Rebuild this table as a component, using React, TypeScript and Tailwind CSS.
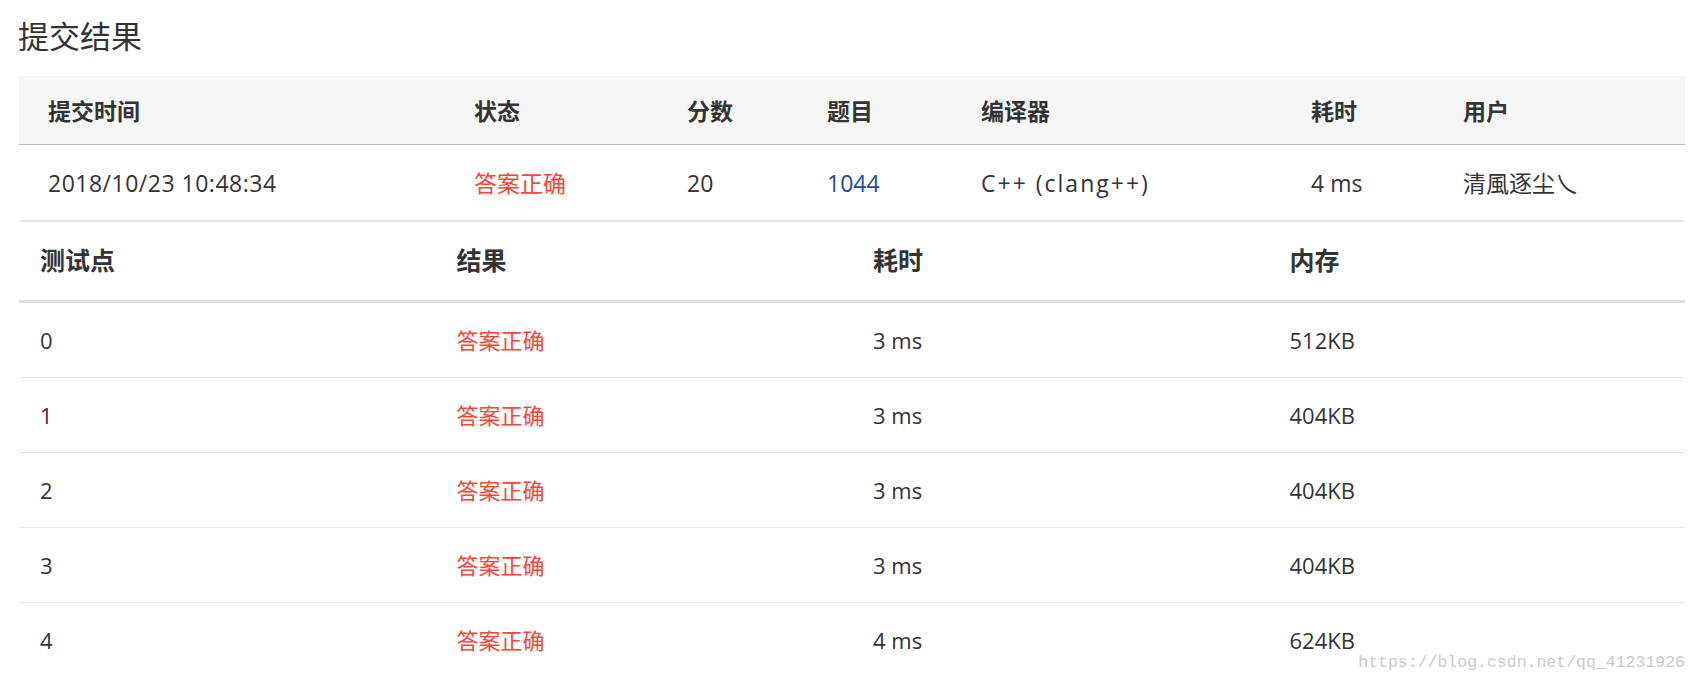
import React from "react";

const font = { fontFamily: '"Open Sans", "Noto Sans CJK SC", sans-serif' };

const summaryHead = ["提交时间", "状态", "分数", "题目", "编译器", "耗时", "用户"];

const cases = [
  { id: "0", time: "3 ms", mem: "512KB" },
  { id: "1", time: "3 ms", mem: "404KB" },
  { id: "2", time: "3 ms", mem: "404KB" },
  { id: "3", time: "3 ms", mem: "404KB" },
  { id: "4", time: "4 ms", mem: "624KB" },
];

const summaryCols = "grid grid-cols-[426px_213px_140px_154px_330px_152px_1fr] pl-[29px]";

export default function App() {
  return (
    <div className="relative h-[686px] w-[1697px] overflow-hidden bg-white text-[#333]" style={font}>
      <div className="flex h-[73px] items-center pl-[18px] mb-[3px]">
        <h1 className="text-[31px] font-normal leading-none text-[#333]">提交结果</h1>
      </div>

      <div className="ml-[19px] w-[1666px]">
        {/* summary */}
        <div className={`${summaryCols} h-[69px] items-center border-b border-[#b4b4b4] bg-[#f6f6f6] text-[23px] font-bold pt-[3px]`}>
          {summaryHead.map((h) => (
            <div key={h}>{h}</div>
          ))}
        </div>
        <div className={`${summaryCols} h-[77px] items-center border-b-2 border-[#e6e6e6] text-[23px] pt-[1px]`}>
          <div className="tracking-[0.5px]">2018/10/23 10:48:34</div>
          <div className="text-[#fa4538]">答案正确</div>
          <div>20</div>
          <div className="text-[#1a4d99]">1044</div>
          <div className="tracking-[2px]">C++ (clang++)</div>
          <div>4 ms</div>
          <div>清風逐尘乀</div>
        </div>

        {/* test cases */}
        <div className="grid h-[81px] grid-cols-4 items-center border-b-[3px] border-[#dedfe5] text-[25px] font-bold">
          <div className="pl-[21px]">测试点</div>
          <div className="pl-[21px]">结果</div>
          <div className="pl-[21px]">耗时</div>
          <div className="pl-[21px]">内存</div>
        </div>
        {cases.map((c, i) => (
          <div
            key={c.id}
            className={`grid h-[75px] grid-cols-4 items-center text-[22px] ${i < cases.length - 1 ? "border-b border-[#e3e3e8]" : ""}`}
          >
            <div className="pl-[21px]">{c.id}</div>
            <div className="pl-[21px] text-[#fa4538]">答案正确</div>
            <div className="pl-[21px]">{c.time}</div>
            <div className="pl-[21px]">{c.mem}</div>
          </div>
        ))}
      </div>

      <div
        className="absolute right-[12px] top-[655px] text-[16.5px] leading-none text-[#cacaca]"
        style={{ fontFamily: '"Liberation Mono", monospace' }}
      >
        https://blog.csdn.net/qq_41231926
      </div>
    </div>
  );
}
